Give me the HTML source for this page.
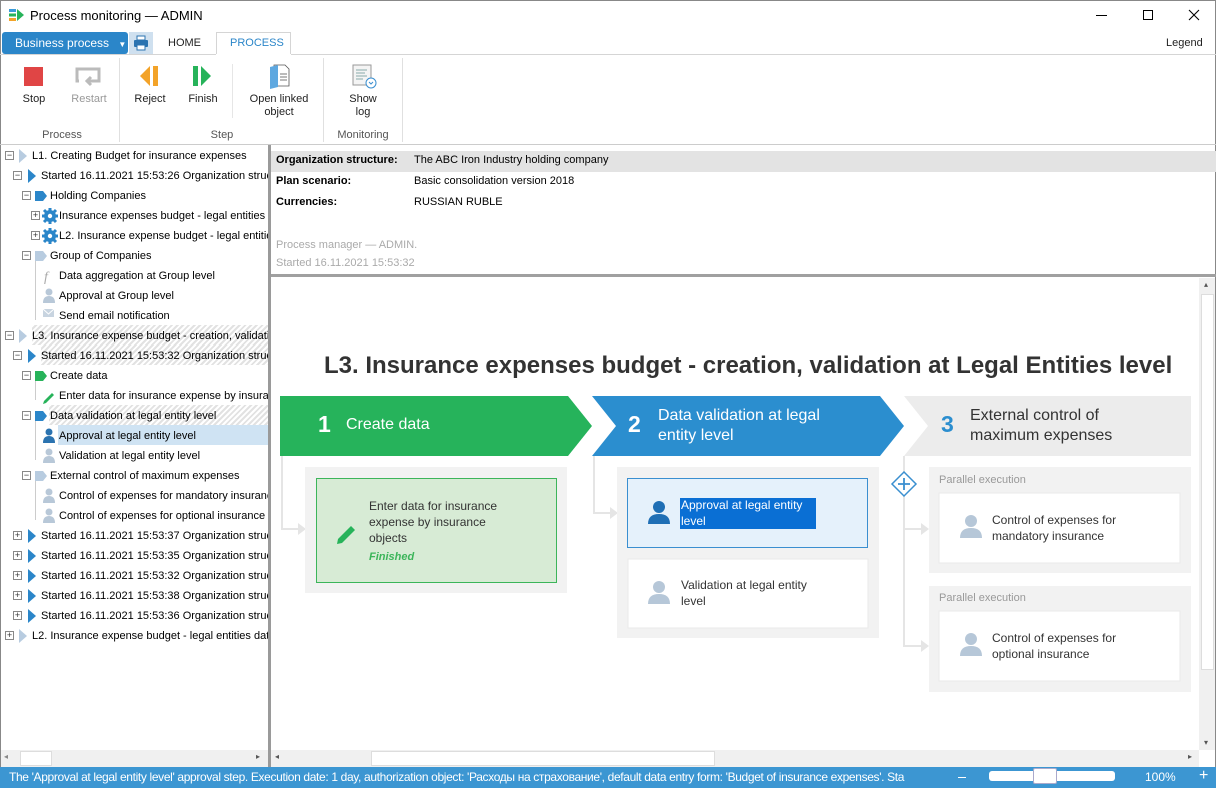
<!DOCTYPE html>
<html><head><meta charset="utf-8"><style>
*{margin:0;padding:0;box-sizing:border-box}
body{width:1216px;height:788px;position:relative;overflow:hidden;background:#fff;font-family:"Liberation Sans","Noto Sans CJK SC",sans-serif;font-size:12px;color:#000}
.a{position:absolute}
.t{position:absolute;white-space:nowrap;font-size:11px;line-height:20px;height:20px}
.pm{position:absolute;width:9px;height:9px;border:1px solid #888;background:#fff;font-size:9px;line-height:7px;text-align:center;color:#333}
.rb{position:absolute;text-align:center;font-size:11px;color:#222;line-height:13px}
.dt{font-family:"Liberation Sans",sans-serif}
</style></head><body>
<div class="a" style="left:0;top:0;width:1216px;height:788px;border:1px solid #888;"></div>
<svg class="a" style="left:9px;top:8px" width="16" height="14"><rect x="0" y="1" width="7" height="3" fill="#3a9ad9"/><rect x="0" y="5.5" width="7" height="3" fill="#27b35a"/><rect x="0" y="10" width="7" height="3" fill="#f3a329"/><path d="M8 1 L15 7 L8 13Z" fill="#27b35a"/></svg>
<div class="a" style="left:30px;top:8px;font-size:13px">Process monitoring — ADMIN</div>
<div class="a" style="left:1096px;top:15px;width:11px;height:1px;background:#000"></div>
<div class="a" style="left:1143px;top:10px;width:10px;height:10px;border:1px solid #000"></div>
<svg class="a" style="left:1188px;top:9px" width="12" height="12"><path d="M1 1L11 11M11 1L1 11" stroke="#000" stroke-width="1.1"/></svg>
<div class="a" style="left:2px;top:32px;width:126px;height:22px;background:#2b86c9;border-radius:3px;color:#fff;font-size:12px;line-height:22px;padding-left:13px">Business process <span style="font-size:8px;margin-left:6px">▼</span></div>
<div class="a" style="left:129px;top:32px;width:24px;height:22px;background:#cfe0ef"></div>
<svg class="a" style="left:133px;top:35px" width="16" height="16"><rect x="4" y="1" width="8" height="4" fill="#fff" stroke="#2b73b0"/><rect x="1" y="5" width="14" height="7" rx="1" fill="#2b73b0"/><rect x="4" y="10" width="8" height="5" fill="#fff" stroke="#2b73b0"/></svg>
<div class="a" style="left:168px;top:37px;font-size:11px;color:#222">HOME</div>
<div class="a" style="left:216px;top:32px;width:75px;height:23px;border:1px solid #d5d5d5;border-bottom:none;background:#fff"></div>
<div class="a" style="left:230px;top:37px;font-size:11px;color:#2b86c9">PROCESS</div>
<div class="a" style="left:1166px;top:37px;font-size:11px;color:#222">Legend</div>
<div class="a" style="left:0;top:54px;width:1216px;height:1px;background:#d5d5d5"></div>
<div class="a" style="left:216px;top:54px;width:75px;height:1px;background:#fff"></div>
<div class="a" style="left:24px;top:67px;width:19px;height:19px;background:#e04545"></div>
<svg class="a" style="left:75px;top:67px" width="28" height="20"><path d="M4 14 H2 V2 H24 V14 H14 M16 10 L12 14 L16 18" fill="none" stroke="#bbb" stroke-width="3"/></svg>
<svg class="a" style="left:140px;top:65px" width="22" height="22"><path d="M10 1 L0 11 L10 21Z" fill="#f3a329"/><rect x="13" y="1" width="5" height="20" fill="#f3a329"/></svg>
<svg class="a" style="left:192px;top:65px" width="22" height="22"><rect x="1" y="1" width="5" height="20" fill="#27b35a"/><path d="M9 1 L19 11 L9 21Z" fill="#27b35a"/></svg>
<svg class="a" style="left:268px;top:64px" width="24" height="26"><path d="M6 1 H17 L21 5 V22 H6Z" fill="#fff" stroke="#555" stroke-width=".8"/><path d="M2 3 L10 1 V23 L2 25Z" fill="#5ea8e0"/><path d="M12 10H19M12 13H19M12 16H19" stroke="#777"/></svg>
<svg class="a" style="left:352px;top:64px" width="26" height="26"><rect x="1" y="1" width="18" height="20" fill="#f4f4f4" stroke="#999"/><path d="M4 6H15M4 9H13M4 12H15M4 15H11" stroke="#8aa"/><circle cx="19" cy="19" r="5" fill="#fff" stroke="#3a8fd0"/><path d="M17 18 L19 20 L21 18" stroke="#3a8fd0" fill="none"/></svg>
<div class="rb" style="left:14px;top:93px;width:40px">Stop</div>
<div class="rb" style="left:64px;top:93px;width:50px;color:#999">Restart</div>
<div class="rb" style="left:127px;top:93px;width:46px">Reject</div>
<div class="rb" style="left:180px;top:93px;width:46px">Finish</div>
<div class="rb" style="left:240px;top:93px;width:78px">Open linked<br>object</div>
<div class="rb" style="left:338px;top:93px;width:50px">Show<br>log</div>
<div class="rb" style="left:30px;top:129px;width:64px;color:#555">Process</div>
<div class="rb" style="left:190px;top:129px;width:64px;color:#555">Step</div>
<div class="rb" style="left:324px;top:129px;width:78px;color:#555">Monitoring</div>
<div class="a" style="left:119px;top:58px;width:1px;height:84px;background:#e0e0e0"></div>
<div class="a" style="left:232px;top:64px;width:1px;height:54px;background:#e6e6e6"></div>
<div class="a" style="left:323px;top:58px;width:1px;height:84px;background:#e0e0e0"></div>
<div class="a" style="left:402px;top:58px;width:1px;height:84px;background:#e0e0e0"></div>
<div class="a" style="left:0;top:144px;width:1216px;height:1px;background:#ccc"></div>
<div class="a" style="left:268px;top:145px;width:3px;height:622px;background:#9a9a9a"></div>
<div class="a" style="left:1px;top:145px;width:267px;height:605px;overflow:hidden">
<div class="a" style="left:31px;top:180px;width:240px;height:20px;background:repeating-linear-gradient(135deg,#fff 0 2px,#e2e2e2 2px 4px)"></div>
<div class="a" style="left:40px;top:200px;width:230px;height:20px;background:repeating-linear-gradient(135deg,#fff 0 2px,#e2e2e2 2px 4px)"></div>
<div class="a" style="left:48px;top:260px;width:230px;height:20px;background:repeating-linear-gradient(135deg,#fff 0 2px,#e2e2e2 2px 4px)"></div>
<div class="a" style="left:57px;top:280px;width:220px;height:20px;background:#cfe3f3"></div>
</div>
<svg class="a" style="left:1px;top:145px" width="267" height="605">
<g stroke="#ccc" fill="none">
<path d="M34.5 115 V175 M34.5 235 V255 M34.5 275 V315 M34.5 335 V375"/>
</g>
<g fill="#b8cce0"><path d="M18 4 L26 11 L18 18Z"/><path d="M18 184 L26 191 L18 198Z"/><path d="M18 484 L26 491 L18 498Z"/></g>
<g fill="#2b86c9"><path d="M27 24 L35 31 L27 38Z"/><path d="M27 204 L35 211 L27 218Z"/><path d="M27 384 L35 391 L27 398Z"/><path d="M27 404 L35 411 L27 418Z"/><path d="M27 424 L35 431 L27 438Z"/><path d="M27 444 L35 451 L27 458Z"/><path d="M27 464 L35 471 L27 478Z"/></g>
<path d="M34 46 H42 L46 51 L42 56 H34Z" fill="#2b86c9"/>
<path d="M34 106 H42 L46 111 L42 116 H34Z" fill="#b8cce0"/>
<path d="M34 226 H42 L46 231 L42 236 H34Z" fill="#27b35a"/>
<path d="M34 266 H42 L46 271 L42 276 H34Z" fill="#2b86c9"/>
<path d="M34 326 H42 L46 331 L42 336 H34Z" fill="#b8cce0"/>
<g fill="#2b86c9"><circle cx="49" cy="71" r="6"/><circle cx="49" cy="91" r="6"/></g>
<g stroke="#2b86c9" stroke-width="3"><path d="M49 63V79M41 71H57M43 65L55 77M55 65L43 77"/><path d="M49 83V99M41 91H57M43 85L55 97M55 85L43 97"/></g>
<g fill="#fff"><circle cx="49" cy="71" r="2.2"/><circle cx="49" cy="91" r="2.2"/></g>
<text x="43" y="136" font-size="14" font-style="italic" fill="#aaa" font-family="Liberation Serif">f</text>
<g fill="#b8c8d8"><circle cx="48" cy="147" r="3.5"/><path d="M42 158 Q42 151 48 151 Q54 151 54 158Z"/><circle cx="48" cy="307" r="3.5"/><path d="M42 318 Q42 311 48 311 Q54 311 54 318Z"/><circle cx="48" cy="347" r="3.5"/><path d="M42 358 Q42 351 48 351 Q54 351 54 358Z"/><circle cx="48" cy="367" r="3.5"/><path d="M42 378 Q42 371 48 371 Q54 371 54 378Z"/></g>
<g fill="#2b73b0"><circle cx="48" cy="287" r="3.5"/><path d="M42 298 Q42 291 48 291 Q54 291 54 298Z"/></g>
<rect x="42" y="164" width="11" height="8" fill="#c8d4e0"/><path d="M42 164 L47.5 169 L53 164" stroke="#fff" fill="none"/>
<path d="M43 256 L51 248 L53 250 L45 258 L42 259Z" fill="#27b35a"/>
</svg>
<div class="pm" style="left:5px;top:151px">−</div>
<div class="pm" style="left:13px;top:171px">−</div>
<div class="pm" style="left:22px;top:191px">−</div>
<div class="pm" style="left:31px;top:211px">+</div>
<div class="pm" style="left:31px;top:231px">+</div>
<div class="pm" style="left:22px;top:251px">−</div>
<div class="pm" style="left:5px;top:331px">−</div>
<div class="pm" style="left:13px;top:351px">−</div>
<div class="pm" style="left:22px;top:371px">−</div>
<div class="pm" style="left:22px;top:411px">−</div>
<div class="pm" style="left:22px;top:471px">−</div>
<div class="pm" style="left:13px;top:531px">+</div>
<div class="pm" style="left:13px;top:551px">+</div>
<div class="pm" style="left:13px;top:571px">+</div>
<div class="pm" style="left:13px;top:591px">+</div>
<div class="pm" style="left:13px;top:611px">+</div>
<div class="pm" style="left:5px;top:631px">+</div>
<div class="a" style="left:0;top:146px;width:268px;height:604px;overflow:hidden">
<div class="t" style="left:32px;top:0">L1. Creating Budget for insurance expenses</div>
<div class="t" style="left:41px;top:20px">Started 16.11.2021 15:53:26 Organization structure</div>
<div class="t" style="left:50px;top:40px">Holding Companies</div>
<div class="t" style="left:59px;top:60px">Insurance expenses budget - legal entities data</div>
<div class="t" style="left:59px;top:80px">L2. Insurance expense budget - legal entities data</div>
<div class="t" style="left:50px;top:100px">Group of Companies</div>
<div class="t" style="left:59px;top:120px">Data aggregation at Group level</div>
<div class="t" style="left:59px;top:140px">Approval at Group level</div>
<div class="t" style="left:59px;top:160px">Send email notification</div>
<div class="t" style="left:32px;top:180px">L3. Insurance expense budget - creation, validation</div>
<div class="t" style="left:41px;top:200px">Started 16.11.2021 15:53:32 Organization structure</div>
<div class="t" style="left:50px;top:220px">Create data</div>
<div class="t" style="left:59px;top:240px">Enter data for insurance expense by insurance</div>
<div class="t" style="left:50px;top:260px">Data validation at legal entity level</div>
<div class="t" style="left:59px;top:280px">Approval at legal entity level</div>
<div class="t" style="left:59px;top:300px">Validation at legal entity level</div>
<div class="t" style="left:50px;top:320px">External control of maximum expenses</div>
<div class="t" style="left:59px;top:340px">Control of expenses for mandatory insurance</div>
<div class="t" style="left:59px;top:360px">Control of expenses for optional insurance</div>
<div class="t" style="left:41px;top:380px">Started 16.11.2021 15:53:37 Organization structure</div>
<div class="t" style="left:41px;top:400px">Started 16.11.2021 15:53:35 Organization structure</div>
<div class="t" style="left:41px;top:420px">Started 16.11.2021 15:53:32 Organization structure</div>
<div class="t" style="left:41px;top:440px">Started 16.11.2021 15:53:38 Organization structure</div>
<div class="t" style="left:41px;top:460px">Started 16.11.2021 15:53:36 Organization structure</div>
<div class="t" style="left:32px;top:480px">L2. Insurance expense budget - legal entities data</div>
</div>
<div class="a" style="left:1px;top:750px;width:267px;height:17px;background:#f0f0f0"></div>
<div class="a" style="left:20px;top:751px;width:32px;height:15px;background:#fff;border:1px solid #ddd"></div>
<div class="a" style="left:4px;top:752px;font-size:8px;color:#888">◂</div>
<div class="a" style="left:256px;top:752px;font-size:8px;color:#555">▸</div>
<div class="a" style="left:271px;top:151px;width:945px;height:21px;background:#e3e3e3"></div>
<div class="a" style="left:276px;top:154px;font-size:11px;font-weight:bold">Organization structure:</div>
<div class="a" style="left:414px;top:154px;font-size:11px">The ABC Iron Industry holding company</div>
<div class="a" style="left:276px;top:175px;font-size:11px;font-weight:bold">Plan scenario:</div>
<div class="a" style="left:414px;top:175px;font-size:11px">Basic consolidation version 2018</div>
<div class="a" style="left:276px;top:196px;font-size:11px;font-weight:bold">Currencies:</div>
<div class="a" style="left:414px;top:196px;font-size:11px">RUSSIAN RUBLE</div>
<div class="a" style="left:276px;top:239px;font-size:11px;color:#aaa">Process manager — ADMIN.</div>
<div class="a" style="left:276px;top:257px;font-size:11px;color:#aaa">Started 16.11.2021 15:53:32</div>
<div class="a" style="left:271px;top:274px;width:945px;height:3px;background:#a0a0a0"></div>
<div class="a dt" style="left:324px;top:352px;font-size:24px;font-weight:bold;color:#333;white-space:nowrap">L3. Insurance expenses budget - creation, validation at Legal Entities level</div>
<svg class="a" style="left:271px;top:390px" width="930" height="310">
<path d="M633 6 H920 V66 H633 L657 36Z" fill="#ececec"/>
<path d="M321 6 H609 L633 36 L609 66 H321 L345 36Z" fill="#2b8ecf"/>
<path d="M9 6 H297 L321 36 L297 66 H9Z" fill="#26b35b"/>
<g stroke="#e5e5e5" stroke-width="2" fill="none"><path d="M11 66 V139 H30"/><path d="M323 66 V123 H342"/><path d="M633 66 V256 H653 M633 139 H653"/></g>
<g fill="#e5e5e5"><path d="M27 133 L35 139 L27 145Z"/><path d="M339 117 L347 123 L339 129Z"/><path d="M650 133 L658 139 L650 145Z"/><path d="M650 250 L658 256 L650 262Z"/></g>
<rect x="34" y="77" width="262" height="126" fill="#f2f2f2"/>
<rect x="45.5" y="88.5" width="240" height="104" fill="#d7ebd5" stroke="#3cb55a"/>
<rect x="346" y="77" width="262" height="171" fill="#f2f2f2"/>
<rect x="356.5" y="88.5" width="240" height="69" fill="#e5f1fb" stroke="#3a8fd0"/>
<rect x="357" y="169" width="240" height="69" fill="#fff" stroke="#eaeaea"/>
<rect x="658" y="77" width="262" height="106" fill="#f2f2f2"/>
<rect x="668" y="103" width="241" height="70" fill="#fff" stroke="#eaeaea"/>
<rect x="658" y="196" width="262" height="106" fill="#f2f2f2"/>
<rect x="668" y="221" width="241" height="70" fill="#fff" stroke="#eaeaea"/>
<path d="M633 82 L645 94 L633 106 L621 94Z" fill="#fff" stroke="#3a8fd0" stroke-width="1.5"/>
<path d="M633 88 V100 M627 94 H639" stroke="#3a8fd0" stroke-width="1.8"/>
<path d="M67 149 L80 136 L84 140 L71 153 L66 154Z" fill="#27b35a"/>
<g fill="#1f6fb5"><circle cx="388" cy="117" r="6"/><path d="M377 134 Q377 124 388 124 Q399 124 399 134Z"/></g>
<g fill="#b6c7d8"><circle cx="388" cy="197" r="6"/><path d="M377 214 Q377 204 388 204 Q399 204 399 214Z"/><circle cx="700" cy="131" r="6"/><path d="M689 148 Q689 138 700 138 Q711 138 711 148Z"/><circle cx="700" cy="249" r="6"/><path d="M689 266 Q689 256 700 256 Q711 256 711 266Z"/></g>
</svg>
<div class="a dt" style="left:318px;top:411px;color:#fff;font-size:23px;font-weight:bold">1</div>
<div class="a dt" style="left:346px;top:416px;color:#fff;font-size:16px">Create data</div>
<div class="a dt" style="left:628px;top:411px;color:#fff;font-size:23px;font-weight:bold">2</div>
<div class="a dt" style="left:658px;top:406px;color:#fff;font-size:16px;line-height:20px">Data validation at legal<br>entity level</div>
<div class="a dt" style="left:941px;top:411px;color:#2b8ecf;font-size:23px;font-weight:bold">3</div>
<div class="a dt" style="left:970px;top:406px;color:#333;font-size:16px;line-height:20px">External control of<br>maximum expenses</div>
<div class="a dt" style="left:369px;top:498px;font-size:12px;line-height:16px;color:#333">Enter data for insurance<br>expense by insurance<br>objects</div>
<div class="a dt" style="left:369px;top:551px;font-size:11px;font-weight:bold;font-style:italic;color:#3cb55a">Finished</div>
<div class="a dt" style="left:680px;top:498px;width:136px;height:31px;background:#0a6fd4"></div>
<div class="a dt" style="left:681px;top:497px;font-size:12px;line-height:16px;color:#fff">Approval at legal entity<br>level</div>
<div class="a dt" style="left:681px;top:577px;font-size:12px;line-height:16px;color:#333">Validation at legal entity<br>level</div>
<div class="a dt" style="left:939px;top:474px;font-size:11px;color:#999">Parallel execution</div>
<div class="a dt" style="left:992px;top:512px;font-size:12px;line-height:16px;color:#333">Control of expenses for<br>mandatory insurance</div>
<div class="a dt" style="left:939px;top:592px;font-size:11px;color:#999">Parallel execution</div>
<div class="a dt" style="left:992px;top:630px;font-size:12px;line-height:16px;color:#333">Control of expenses for<br>optional insurance</div>
<div class="a" style="left:1199px;top:278px;width:16px;height:472px;background:#f0f0f0"></div>
<div class="a" style="left:1201px;top:294px;width:13px;height:376px;background:#fff;border:1px solid #ddd"></div>
<div class="a" style="left:1204px;top:280px;font-size:8px;color:#555">▴</div>
<div class="a" style="left:1204px;top:738px;font-size:8px;color:#555">▾</div>
<div class="a" style="left:271px;top:750px;width:928px;height:17px;background:#f0f0f0"></div>
<div class="a" style="left:371px;top:751px;width:344px;height:15px;background:#fff;border:1px solid #ddd"></div>
<div class="a" style="left:275px;top:752px;font-size:8px;color:#555">◂</div>
<div class="a" style="left:1188px;top:752px;font-size:8px;color:#555">▸</div>
<div class="a" style="left:0;top:767px;width:1216px;height:21px;background:#3c96d2"></div>
<div class="a" style="left:9px;top:770px;color:#fff;font-size:12px;white-space:nowrap;width:950px;overflow:hidden;letter-spacing:-0.35px">The 'Approval at legal entity level' approval step. Execution date: 1 day, authorization object: 'Расходы на страхование', default data entry form: 'Budget of insurance expenses'. Sta</div>
<div class="a" style="left:958px;top:777px;width:8px;height:1px;background:#fff"></div>
<div class="a" style="left:989px;top:771px;width:126px;height:10px;background:#fff;border-radius:3px"></div>
<div class="a" style="left:1033px;top:768px;width:24px;height:16px;background:#fff;border:1px solid #aac;border-radius:2px"></div>
<div class="a" style="left:1145px;top:770px;color:#fff;font-size:12px">100%</div>
<div class="a" style="left:1199px;top:767px;color:#fff;font-size:16px">+</div>
</body></html>
